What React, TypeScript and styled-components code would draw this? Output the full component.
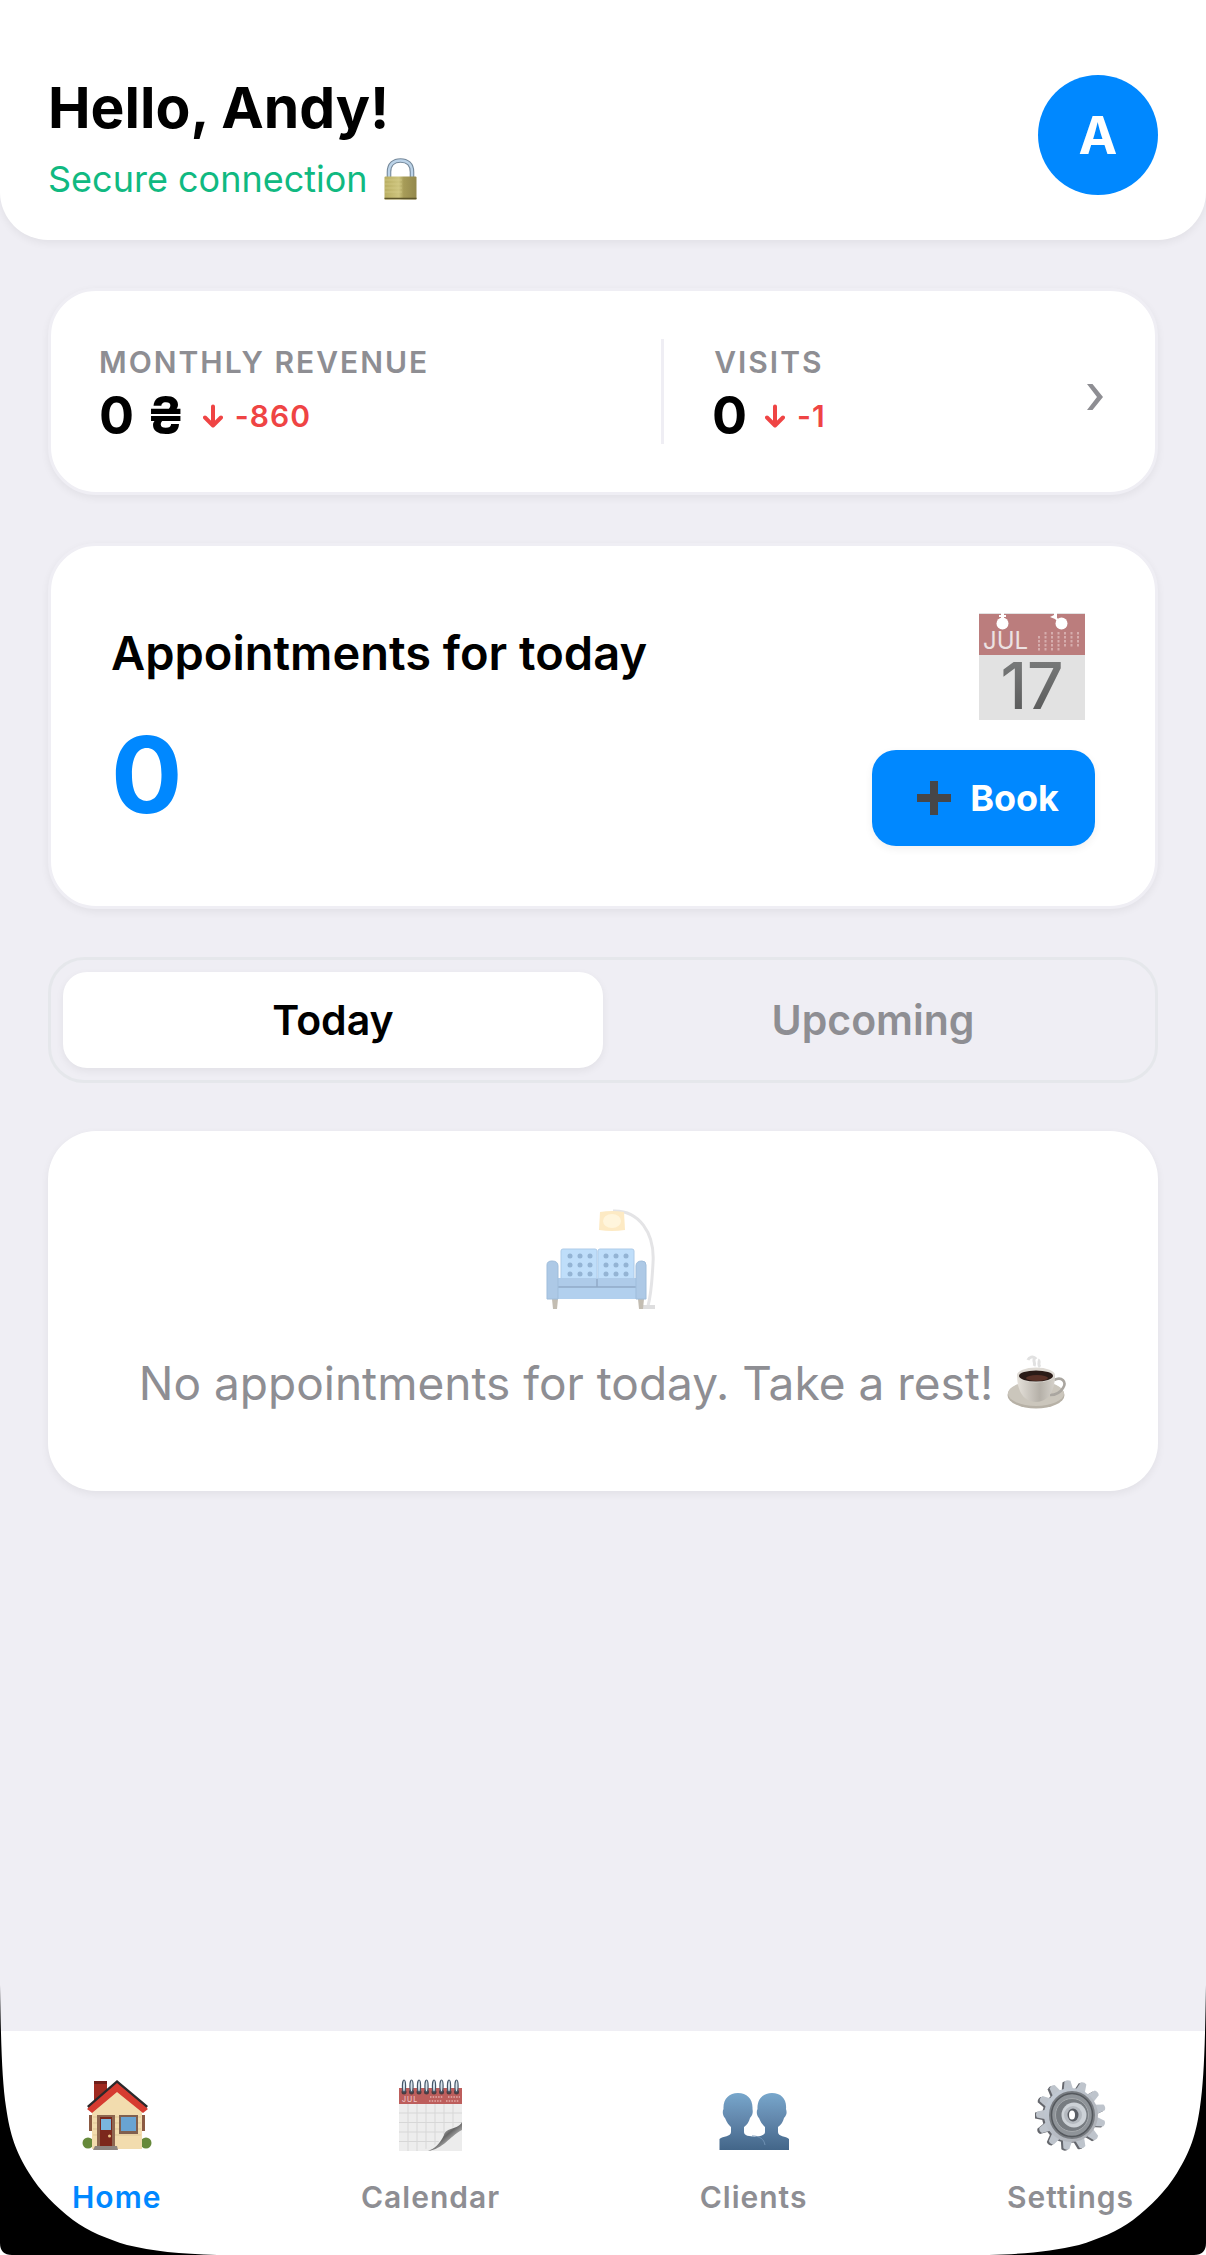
import React from "react";
import styled, { createGlobalStyle } from "styled-components";

const color = {
  page: "#efeef4",
  surface: "#ffffff",
  accent: "#0088ff",
  text: "#000000",
  muted: "#8e8e93",
  success: "#10b981",
  danger: "#ef4444",
  line: "#e5e7eb",
};

const GlobalStyle = createGlobalStyle`
  *, *::before, *::after { box-sizing: border-box; }
  body {
    margin: 0;
    background: ${color.page};
    font-family: Inter, "Liberation Sans", sans-serif;
    color: ${color.text};
  }
  h1, h2, p { margin: 0; }
  button { font: inherit; border: 0; padding: 0; background: none; cursor: pointer; }
  svg { display: block; flex: none; }
`;

const Page = styled.div`
  position: relative;
  display: flex;
  flex-direction: column;
  min-height: 100vh;
  background: ${color.page};
`;

const Header = styled.header`
  display: flex;
  justify-content: space-between;
  align-items: flex-start;
  padding: 75px 48px 40px;
  background: ${color.surface};
  border-radius: 0 0 48px 48px;
  box-shadow: 0 3px 9px rgba(0, 0, 0, 0.06);
`;

const Greeting = styled.h1`
  font-size: 57px;
  line-height: 66px;
  font-weight: 700;
`;

const Status = styled.p`
  display: flex;
  align-items: center;
  gap: 16px;
  margin-top: 17px;
  font-size: 36px;
  line-height: 42px;
  color: ${color.success};
`;

const Avatar = styled.button`
  width: 120px;
  height: 120px;
  border-radius: 50%;
  background: ${color.accent};
  color: ${color.surface};
  font-size: 52px;
  font-weight: 700;
`;

const Main = styled.main`
  flex: 1;
  display: flex;
  flex-direction: column;
  gap: 48px;
  padding: 48px;
`;

const Card = styled.section<{ $bordered?: boolean }>`
  background: ${color.surface};
  border: ${(p) => (p.$bordered ? `3px solid ${color.page}` : "0")};
  border-radius: 48px;
  box-shadow: 0 3px 9px rgba(0, 0, 0, 0.06);
`;

const StatsCard = styled(Card)`
  display: grid;
  grid-template-columns: 1.26fr 1fr;
  padding: 48px;
`;

const VisitsSide = styled.div`
  display: flex;
  justify-content: space-between;
  align-items: center;
  border-left: 3px solid ${color.page};
  padding-left: 48px;
`;

const Stat = styled.div<{ $centered?: boolean }>`
  display: flex;
  flex-direction: column;
  align-items: ${(p) => (p.$centered ? "center" : "flex-start")};
  gap: 3px;
`;

const StatLabel = styled.h2`
  font-size: 30px;
  line-height: 46px;
  font-weight: 600;
  letter-spacing: 2px;
  text-transform: uppercase;
  color: ${color.muted};
`;

const StatRow = styled.p`
  display: flex;
  align-items: center;
  gap: 18px;
  font-size: 52px;
  line-height: 56px;
  font-weight: 700;
`;

const Delta = styled.span`
  display: flex;
  align-items: center;
  gap: 12px;
  font-size: 30px;
  font-weight: 600;
  letter-spacing: 1px;
  color: ${color.danger};
`;

const ChevronButton = styled.button`
  display: flex;
  padding: 10px 3px 0;
`;

const TodayCard = styled(Card)`
  display: flex;
  justify-content: space-between;
  align-items: center;
  padding: 60px;
`;

const Summary = styled.div`
  display: flex;
  flex-direction: column;
  gap: 38px;
`;

const CardTitle = styled.h2`
  font-size: 47px;
  line-height: 60px;
  font-weight: 600;
`;

const Count = styled.p`
  font-size: 106px;
  line-height: 108px;
  font-weight: 700;
  color: ${color.accent};
`;

const Actions = styled.div`
  display: flex;
  flex-direction: column;
  align-items: flex-end;
  gap: 24px;
`;

const BookButton = styled.button`
  display: flex;
  align-items: center;
  gap: 14px;
  height: 96px;
  padding: 0 36px;
  border-radius: 24px;
  background: ${color.accent};
  color: ${color.surface};
  font-size: 36px;
  font-weight: 700;
  box-shadow: 0 3px 9px rgba(0, 0, 0, 0.06);
`;

const Tabs = styled.div`
  display: flex;
  padding: 12px;
  border: 3px solid ${color.line};
  border-radius: 36px;
`;

const Tab = styled.button<{ $active?: boolean }>`
  flex: 1;
  height: 96px;
  border-radius: 24px;
  font-size: 41px;
  font-weight: 600;
  color: ${(p) => (p.$active ? color.text : color.muted)};
  background: ${(p) => (p.$active ? color.surface : "transparent")};
  box-shadow: ${(p) => (p.$active ? "0 3px 9px rgba(0, 0, 0, 0.06)" : "none")};
`;

const EmptyCard = styled(Card)`
  display: flex;
  flex-direction: column;
  align-items: center;
  gap: 24px;
  padding: 72px 48px;
`;

const EmptyText = styled.p`
  display: flex;
  align-items: center;
  gap: 14px;
  font-size: 46px;
  line-height: 72px;
  color: ${color.muted};
`;

const Nav = styled.nav`
  display: flex;
  justify-content: space-between;
  padding: 48px 72px 40px;
  background: ${color.surface};
`;

const NavItem = styled.button<{ $active?: boolean }>`
  display: flex;
  flex-direction: column;
  align-items: center;
  gap: 28px;
  font-size: 30px;
  line-height: 36px;
  font-weight: 600;
  letter-spacing: 1px;
  color: ${(p) => (p.$active ? color.accent : color.muted)};
`;

const Corner = styled.svg<{ $right?: boolean }>`
  position: absolute;
  bottom: 0;
  ${(p) => (p.$right ? "right: 0; transform: scaleX(-1);" : "left: 0;")}
  pointer-events: none;
`;

const DeviceCorner = ({ right }: { right?: boolean }) => (
  <Corner $right={right} width="218" height="270" viewBox="0 0 218 270" aria-hidden="true">
    <path d="M0 0C1 60 2 95 6 122C10 150 16 167 29 188C40 206 55 221 73 235C88 246 107 254 127 260C152 266 180 269 217 270H0Z" fill="#000" />
    <path d="M0 258Q0 270 12 270H0Z" fill="#fff" />
  </Corner>
);

const LockIcon = () => (
  <svg width="33" height="42" viewBox="0 0 33 42" aria-hidden="true">
    <defs>
      <linearGradient id="lock-body" x1="0" x2="1">
        <stop offset="0" stopColor="#b9ae62" />
        <stop offset=".45" stopColor="#cdc47e" />
        <stop offset=".6" stopColor="#a79c58" />
        <stop offset="1" stopColor="#93884c" />
      </linearGradient>
    </defs>
    <path d="M5 20V14C5 6 10 2.500 16.500 2.500S28 6 28 14V20" fill="none" stroke="#75899b" strokeWidth="4.600" />
    <path d="M5 20V14C5 6 10 2.500 16.500 2.500S28 6 28 14V20" fill="none" stroke="#bcd3e8" strokeWidth="2.400" />
    <rect x=".5" y="18.500" width="32" height="23" rx="1" fill="url(#lock-body)" />
    <path d="M1 22H18M1 26H18M1 30H18M1 34H18" stroke="#d8cf8c" strokeWidth="1" opacity=".6" />
    <path d="M.5 40.500H32.500" stroke="#5d552b" strokeWidth="1.400" />
  </svg>
);

const DownArrow = () => (
  <svg width="20" height="24" viewBox="0 0 20 24" aria-hidden="true">
    <path d="M10 2.500V21M2 13.500L10 21.500L18 13.500" fill="none" stroke="currentColor" strokeWidth="4" strokeLinecap="round" strokeLinejoin="round" />
  </svg>
);

const Chevron = () => (
  <svg width="18" height="26" viewBox="0 0 18 26" aria-hidden="true">
    <path d="M1 0H6.500L17 13L6.500 26H1L11 13Z" fill={color.muted} />
  </svg>
);

const miniDays = [
  [1, 2, 3, 4, 5, 6],
  [0, 1, 2, 3, 4, 5, 6],
  [0, 1, 2, 3, 4, 5, 6],
  [0, 1, 2, 3, 4, 5, 6],
  [0, 1, 2, 3],
];

const DateIcon = () => (
  <svg width="120" height="120" viewBox="0 0 120 120" aria-hidden="true">
    <defs>
      <linearGradient id="date-ink" x1="0" y1="0" x2="0" y2="1">
        <stop offset="0" stopColor="#808282" />
        <stop offset="1" stopColor="#545454" />
      </linearGradient>
    </defs>
    <rect x="4" y="7" width="106" height="107" fill="#e2e2e2" />
    <rect x="4" y="8" width="106" height="41" fill="#bb7d7d" />
    <g fill="#fff">
      <circle cx="27.500" cy="17.500" r="6" />
      <circle cx="86.500" cy="17.500" r="6" />
      <path d="M26 7H29V9H31V11H29V13H26V11H24V9H26ZM79 7H82V12L86 15L84 17L80 13L75 11L79 9Z" />
    </g>
    <text x="8" y="43" fontFamily="Inter, sans-serif" fontSize="24" fontWeight="400" fill="#ece2e2">JUL</text>
    <g fill="#d6adad">
      {miniDays.map((row, r) =>
        row.map((c) => <rect key={`${r}-${c}`} x={63 + c * 6.5} y={26 + r * 4} width="2" height="2.500" />)
      )}
    </g>
    <text x="57" y="103" textAnchor="middle" fontFamily="Inter, sans-serif" fontSize="64" fontWeight="500" fill="url(#date-ink)">17</text>
  </svg>
);

const PlusIcon = () => (
  <svg width="48" height="48" viewBox="0 0 48 48" aria-hidden="true">
    <path d="M22 7H30V20H43V28H30V41H22V28H9V20H22Z" fill="#464648" />
  </svg>
);

const SofaIcon = () => (
  <svg width="120" height="120" viewBox="0 0 120 120" aria-hidden="true">
    <path d="M70 8C96 7 112 30 110 60C109 80 108 92 105 103" fill="none" stroke="#e4e4e6" strokeWidth="3" />
    <rect x="97" y="102" width="15" height="4" fill="#dededf" />
    <path d="M57 9Q69 7 81 9L82 27Q69 29 56 27Z" fill="#fdeac4" />
    <ellipse cx="69" cy="18" rx="9" ry="7" fill="#fff5dc" />
    <path d="M9 96H15L14 106H10ZM95 96H101L100 106H96Z" fill="#c3bdb2" />
    <rect x="18" y="46" width="36" height="32" rx="2" fill="#bfdefa" stroke="#aecbe8" />
    <rect x="55" y="46" width="36" height="32" rx="2" fill="#bfdefa" stroke="#aecbe8" />
    <g fill="#94b4d4">
      {[27, 37, 47, 63, 73, 83].map((x) =>
        [53, 62, 71].map((y) => <circle key={`${x}-${y}`} cx={x} cy={y} r="2.500" />)
      )}
    </g>
    <rect x="14" y="75" width="80" height="9" fill="#aecbe9" />
    <rect x="14" y="84" width="80" height="12" fill="#b2d0ee" />
    <path d="M15 84H94M54 76V84" stroke="#91abc7" strokeWidth="1.500" />
    <path d="M4 62Q4 58 9 58Q15 58 15 63V96H4ZM93 63Q93 58 99 58Q103 58 103 62V96H93Z" fill="#adc9e6" stroke="#9fbddb" />
  </svg>
);

const CoffeeIcon = () => (
  <svg width="60" height="56" viewBox="0 0 60 56" aria-hidden="true">
    <defs>
      <linearGradient id="cup" x1="0" x2="1">
        <stop offset="0" stopColor="#e5e1da" />
        <stop offset=".6" stopColor="#b5b0a8" />
        <stop offset="1" stopColor="#d6d2cb" />
      </linearGradient>
    </defs>
    <g fill="none" stroke="#d9d9d9" strokeWidth="3" opacity=".8">
      <path d="M21 5C22 2 26 1 28 3C25 5 29 8 27 11M31 5C34 6 30 9 33 12" />
    </g>
    <ellipse cx="29" cy="40" rx="28.500" ry="13.500" fill="#b7b1a6" />
    <ellipse cx="29" cy="38.500" rx="28" ry="12.500" fill="#cbc6bc" />
    <path d="M47 25C55 21 60 27 56 33C53 38 48 40 43 40" fill="none" stroke="#aaa6a0" strokeWidth="2.600" />
    <path d="M10 20C10 33 15 47 29 47S48 33 48 20Z" fill="url(#cup)" />
    <ellipse cx="29" cy="20" rx="19" ry="7.500" fill="#dedad4" />
    <ellipse cx="29" cy="21" rx="17" ry="5.500" fill="#2a1b17" />
    <ellipse cx="30" cy="23" rx="11" ry="3" fill="#583127" />
  </svg>
);

const HomeIcon = () => (
  <svg width="72" height="72" viewBox="0 0 72 72" aria-hidden="true">
    <path d="M13 2H26V20L13 28Z" fill="#a02a20" />
    <path d="M13 2H26V5H13Z" fill="#6f1f1a" />
    <path d="M11 31L36 7L61 31V70H11Z" fill="#f2dcae" />
    <path d="M12 38H60M12 44H60M12 50H60M12 56H60M12 62H60" stroke="#dfc797" strokeWidth="1" />
    <path d="M6 27L36 1L67 27L62 33L36 11L11 33Z" fill="#2b292b" />
    <path d="M6 30L36 4L67 30L62 34L36 13L11 34Z" fill="#d63b30" />
    <circle cx="7" cy="64" r="5.500" fill="#66893a" />
    <circle cx="65" cy="64" r="5.500" fill="#66893a" />
    <path d="M8 36H11V52H8ZM61 36H64V52H61Z" fill="#8b5a42" />
    <path d="M11 60V70H61V60" fill="#f2dcae" />
    <rect x="16" y="36" width="18" height="32" fill="#8d6650" />
    <rect x="19" y="38" width="12" height="29" fill="#7c281c" />
    <rect x="20" y="40" width="10" height="11" fill="#7ab5dd" />
    <circle cx="28.500" cy="57" r="1.500" fill="#edc487" />
    <rect x="38" y="36" width="19" height="19" fill="#80604f" />
    <rect x="40" y="38" width="15" height="14" fill="#69a4d2" />
    <path d="M14 67H36L37 71H12Z" fill="#8d8580" />
  </svg>
);

const CalendarIcon = () => (
  <svg width="72" height="72" viewBox="0 0 72 72" aria-hidden="true">
    <defs>
      <linearGradient id="page-curl" x1="0" y1="0" x2="1" y2="1">
        <stop offset=".2" stopColor="#fafafa" />
        <stop offset=".5" stopColor="#666" />
        <stop offset=".75" stopColor="#d2d2d2" />
      </linearGradient>
    </defs>
    <rect x="4" y="9" width="63" height="63" fill="#ededed" />
    <path d="M4 34H67M4 43.500H67M4 53H67M4 62.500H67M13 25V72M22 25V72M31 25V72M40 25V72M49 25V72M58 25V72" stroke="#d7d7d7" strokeWidth="1" />
    <rect x="4" y="9" width="63" height="16" fill="#bd5e5c" />
    <text x="7" y="23" fontFamily="Inter, sans-serif" fontSize="7" fontWeight="500" fill="#f0c9c7">JUL</text>
    <path d="M35 18H48M34 22H47M53 18H65M51 22H64" stroke="#da9996" strokeWidth="2" strokeDasharray="1.500 1.200" />
    <g>
      {[9, 16.5, 24, 31.5, 39, 46.5, 54, 61.5].map((x) => (
        <g key={x}>
          <circle cx={x} cy="13" r="2.500" fill="#4c3d42" />
          <ellipse cx={x} cy="7" rx="1.600" ry="6" fill="#d5e1e9" stroke="#455668" strokeWidth="1.200" />
        </g>
      ))}
    </g>
    <path d="M67 43C62 51 52 46 49 55C44 65 37 69 23 72H67Z" fill="#ececec" />
    <path d="M67 43C63 51 51 48 49 56C45 65 39 70 33 72C48 70 54 58 67 51Z" fill="url(#page-curl)" />
  </svg>
);

const ClientsIcon = () => (
  <svg width="72" height="72" viewBox="0 0 72 72" aria-hidden="true">
    <defs>
      <linearGradient id="people" x1="0" y1="13" x2="0" y2="71" gradientUnits="userSpaceOnUse">
        <stop offset="0" stopColor="#78a8cd" />
        <stop offset=".45" stopColor="#6489ae" />
        <stop offset="1" stopColor="#436689" />
      </linearGradient>
    </defs>
    <path d="M54 14C45 14 39 20 39.500 30C38 33 39 37 41 39C43 44 45 46 47 48V53C47 58 36 57 32 60V71H71V60C68 57 60 58 60 53V48C63 46 65 43 66 39C69 36 69 33 68 30C69 20 63 14 54 14Z" fill="url(#people)" />
    <path d="M20 14C11 14 5 20 5.500 30C4 33 5 37 7 39C9 44 11 46 13 48V53C13 58 5 57 1.500 60V71H47C47 63 44 59 38 58C31 57 26 57 26 53V48C29 46 31 43 32 39C35 36 35 33 34.500 30C35 20 29 14 20 14Z" fill="url(#people)" />
    <path d="M34 57C42 57 46 60 47 66" fill="none" stroke="#6f91b3" strokeWidth="1" />
  </svg>
);

const SettingsIcon = () => (
  <svg width="72" height="72" viewBox="0 0 72 72" aria-hidden="true">
    <defs>
      <path id="gear-tooth" d="M31 12L33 2Q36 0 39 2L41 12Z" />
      <linearGradient id="gear-metal" x1="0" y1="0" x2="1" y2="1">
        <stop offset="0" stopColor="#c5ced9" />
        <stop offset="1" stopColor="#a9abb0" />
      </linearGradient>
    </defs>
    <g fill="#65676d" transform="translate(-2 1)">
      {Array.from({ length: 13 }, (_, i) => (
        <use key={i} href="#gear-tooth" transform={`rotate(${(i * 360) / 13 - 6} 36 36)`} />
      ))}
      <circle cx="36" cy="36" r="27" />
    </g>
    <g fill="#bec4cc">
      {Array.from({ length: 13 }, (_, i) => (
        <use key={i} href="#gear-tooth" transform={`rotate(${(i * 360) / 13 - 6} 36 36)`} />
      ))}
    </g>
    <circle cx="36" cy="36" r="27" fill="url(#gear-metal)" />
    <ellipse cx="37" cy="36" rx="23" ry="24" fill="#787c81" />
    <ellipse cx="37" cy="36" rx="20.500" ry="21.500" fill="#8f9499" stroke="#54585d" strokeWidth="1.500" />
    <circle cx="37" cy="36" r="16.500" fill="#777c81" stroke="#a5a9ad" />
    <circle cx="39" cy="36" r="12.500" fill="#cdd2d7" />
    <circle cx="38" cy="36" r="9" fill="#b5bac0" />
    <ellipse cx="38" cy="36" rx="5.500" ry="6.500" fill="#595d63" />
    <ellipse cx="37" cy="36" rx="3" ry="4.500" fill="#fff" />
  </svg>
);

const navItems = [
  { label: "Home", Icon: HomeIcon },
  { label: "Calendar", Icon: CalendarIcon },
  { label: "Clients", Icon: ClientsIcon },
  { label: "Settings", Icon: SettingsIcon },
];

export default function App() {
  return (
    <Page>
      <GlobalStyle />
      <Header>
        <div>
          <Greeting>Hello, Andy!</Greeting>
          <Status>
            Secure connection <LockIcon />
          </Status>
        </div>
        <Avatar type="button">A</Avatar>
      </Header>
      <Main>
        <StatsCard $bordered>
          <Stat>
            <StatLabel>Monthly revenue</StatLabel>
            <StatRow>
              0 ₴
              <Delta>
                <DownArrow />
                -860
              </Delta>
            </StatRow>
          </Stat>
          <VisitsSide>
            <Stat $centered>
              <StatLabel>Visits</StatLabel>
              <StatRow>
                0
                <Delta>
                  <DownArrow />
                  -1
                </Delta>
              </StatRow>
            </Stat>
            <ChevronButton type="button" aria-label="Open statistics">
              <Chevron />
            </ChevronButton>
          </VisitsSide>
        </StatsCard>
        <TodayCard $bordered>
          <Summary>
            <CardTitle>Appointments for today</CardTitle>
            <Count>0</Count>
          </Summary>
          <Actions>
            <DateIcon />
            <BookButton type="button">
              <PlusIcon />
              Book
            </BookButton>
          </Actions>
        </TodayCard>
        <Tabs role="tablist">
          <Tab type="button" role="tab" aria-selected="true" $active>
            Today
          </Tab>
          <Tab type="button" role="tab" aria-selected="false">
            Upcoming
          </Tab>
        </Tabs>
        <EmptyCard>
          <SofaIcon />
          <EmptyText>
            No appointments for today. Take a rest! <CoffeeIcon />
          </EmptyText>
        </EmptyCard>
      </Main>
      <Nav>
        {navItems.map(({ label, Icon }, i) => (
          <NavItem key={label} type="button" $active={i === 0} aria-current={i === 0 ? "page" : undefined}>
            <Icon />
            {label}
          </NavItem>
        ))}
      </Nav>
      <DeviceCorner />
      <DeviceCorner right />
    </Page>
  );
}
